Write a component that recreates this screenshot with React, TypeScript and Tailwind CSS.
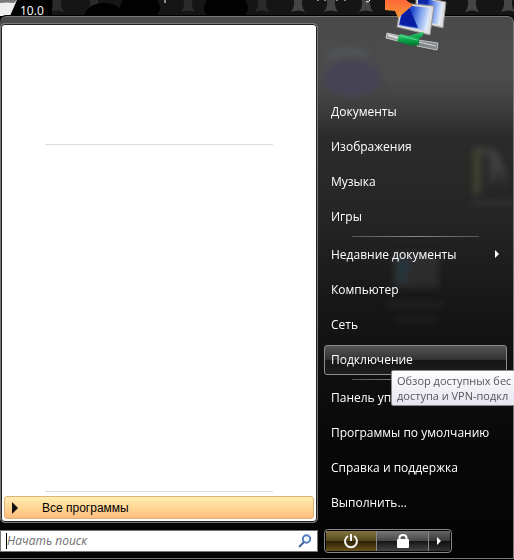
import React from 'react';

const places = ['Документы', 'Изображения', 'Музыка', 'Игры'];
const settings = ['Программы по умолчанию', 'Справка и поддержка', 'Выполнить...'];
const starX = [20, 57, 94, 131, 188, 225, 262, 298, 331, 366, 436, 472, 508];

function Wallpaper() {
  return (
    <svg className="absolute inset-0" width="100%" height="28" aria-hidden="true">
      <rect width="100%" height="28" fill="#151515" />
      {starX.map((x) => (
        <path key={x} d={`M${x - 5} -2 Q${x} 1 ${x + 5} -2 Q${x + 2} 5 ${x + 7} 12 Q${x} 9 ${x - 7} 12 Q${x - 2} 5 ${x - 5} -2Z`} fill={x > 270 ? '#444444' : '#2b2b2b'} />
      ))}
      <ellipse cx="104" cy="17" rx="20" ry="14" fill="#020202" />
      <ellipse cx="140" cy="8" rx="20" ry="14" fill="#020202" />
      <ellipse cx="226" cy="8" rx="22" ry="16" fill="#020202" />
      <path d="M0 0H52V28H0Z" fill="#020202" />
      <path d="M0 0H17L10 16H0Z" fill="#eeeeee" />
      <path d="M0 0H17L14 3Q6 2 0 3Z" fill="#777777" />
      <path d="M165 0v3M370 0q-1 2-4 2M318 0v1M325 0v1M337 0v1M345 0v1" stroke="#ffffff" fill="none" />
    </svg>
  );
}

function NetworkIcon() {
  return (
    <svg className="absolute top-0 right-[64px]" width="70" height="55" viewBox="0 0 70 55" role="img" aria-label="Подключение">
      <defs>
        <linearGradient id="screen" x1="0" y1="0" x2="1" y2="0.2">
          <stop offset="0" stopColor="#0d30b8" /><stop offset="0.45" stopColor="#254dca" />
          <stop offset="0.7" stopColor="#7b9eec" /><stop offset="1" stopColor="#e1edfb" />
        </linearGradient>
        <linearGradient id="arrow" x1="0" y1="0" x2="0" y2="1">
          <stop stopColor="#ff6638" /><stop offset="1" stopColor="#f39b35" />
        </linearGradient>
        <linearGradient id="cable" x1="0" y1="0" x2="0" y2="1">
          <stop stopColor="#3cce7a" /><stop offset="0.5" stopColor="#08a84b" /><stop offset="1" stopColor="#046c2a" />
        </linearGradient>
      </defs>
      <path d="M36 -4L66 2L63 28L50 25L36 20Z" fill="#dedede" stroke="#8d8d92" />
      <path d="M38 -3L63 3L60 25L38 20Z" fill="url(#screen)" />
      <path d="M38 -2L48 0V4L38 3Z" fill="#0b25a7" />
      <path d="M21 3L54 6L50 35L17 27Z" fill="#dedede" stroke="#909095" />
      <path d="M23 5L51 8L47 31L19 25Z" fill="url(#screen)" />
      <path d="M24 7L30 9L38 28L20 24Z" fill="#091da2" />
      <path d="M5 0H26L33 5L18 18L15 11L5 10Z" fill="url(#arrow)" />
      <path d="M44 32L42 37L32 41L25 37L35 34Z" fill="url(#cable)" />
      <path d="M7 33L20 36L18 41L6 38Z" fill="#999c9e" stroke="#c6c8c8" />
      <path d="M8 35L18 38" stroke="#dddddd" strokeWidth="2" />
      <path d="M38 40L58 43L57 50L37 46Z" fill="#85888a" stroke="#bdc1c2" />
      <path d="M39 42L56 46" stroke="#d5d8da" />
      <path d="M20 34L39 38L39 45L31 46L17 41Z" fill="url(#cable)" />
      <path d="M21 36L37 40" stroke="#62d691" />
    </svg>
  );
}

function Reflections() {
  return (
    <svg className="pointer-events-none absolute inset-0" width="195" height="500" aria-hidden="true">
      <defs>
        <filter id="haze"><feGaussianBlur stdDeviation="3" /></filter>
      </defs>
      <g filter="url(#haze)">
        <path d="M10 41Q30 28 49 39" stroke="#64747a" strokeWidth="8" fill="none" opacity="0.25" />
        <ellipse cx="34" cy="61" rx="29" ry="19" fill="#454454" opacity="0.9" />
        <path d="M155 131L170 131V136H163V174L155 180Z" fill="#858054" opacity="0.28" />
        <path d="M170 131L180 135L187 152V173L181 152L173 170Z" fill="#65656d" opacity="0.38" />
        <path d="M153 186H196" stroke="#666666" strokeWidth="3" opacity="0.25" />
        <path d="M75 236H121V271H75Z" fill="#5a6263" opacity="0.24" />
        <path d="M80 241L92 243L87 267L78 263Z" fill="#194858" opacity="0.35" />
        <path d="M68 288H126M77 303H119" stroke="#707070" strokeWidth="5" opacity="0.12" />
      </g>
    </svg>
  );
}

function MenuItem({ children }: { children: React.ReactNode }) {
  return <button type="button" className="flex h-[35px] w-full items-center px-[7px] text-left">{children}</button>;
}

function Separator() {
  return <div className="mx-7 h-[3px] pt-[2px]"><div className="h-px bg-gradient-to-r from-[#555555] via-[#888888] to-[#555555]" /></div>;
}

export default function App() {
  return (
    <main className="relative overflow-hidden bg-black font-['Open_Sans',sans-serif] text-[12px] leading-[16px] text-white">
      <Wallpaper />
      <div className="relative h-4 pt-[3px] pl-5 leading-[15px]">10.0</div>
      <section className="relative flex flex-col rounded-t-[6px] border border-l-0 border-[#777777] bg-[linear-gradient(180deg,#4a4a4a_0px,#4c4c4c_60px,#414141_85px,#2b2b2b_120px,#252525_200px,#151515_300px,#080808_430px,#030303_100%)] outline-1 outline-black">
        <div className="flex">
          <div className="mt-[6px] flex h-[500px] min-w-0 flex-1 flex-col rounded-[5px] border border-[#777777] bg-white p-[3px] shadow-[inset_0_0_0_1px_#222222]">
            <hr className="mx-[41px] mt-[117px] border-[#dddddd]" />
            <hr className="mx-[41px] mt-auto mb-1 border-[#dddddd]" />
            <button type="button" className="flex h-[23px] w-full items-center rounded-[3px] border border-[#ddb277] bg-gradient-to-b from-[#ffedb1] via-[#ffd795] to-[#ffbd7c] px-[7px] text-black font-['Liberation_Sans',sans-serif]">
              <svg width="30" height="14" viewBox="0 0 30 14" aria-hidden="true"><path d="M0 1L6 7L0 13Z" fill="#111111" /></svg>
              Все программы
            </button>
          </div>
          <nav aria-label="Меню Пуск" className="relative w-[195px] px-[6px] pt-[77px]">
            <Reflections />
            <div className="relative">
              {places.map((label) => <MenuItem key={label}>{label}</MenuItem>)}
              <Separator />
              <MenuItem><span className="flex-1">Недавние документы</span><svg width="6" height="9" aria-hidden="true"><path d="M1 0L5 4L1 8Z" fill="white" /></svg></MenuItem>
              <MenuItem>Компьютер</MenuItem>
              <MenuItem>Сеть</MenuItem>
              <div className="relative flex h-[35px] items-center">
                <button type="button" aria-describedby="connection-tip" className="flex h-[30px] w-full items-center rounded-[3px] border border-[#8b8b8b] bg-[linear-gradient(180deg,#555555,#333333_48%,#161616_52%,#1d1d1d)] px-[6px] text-left">Подключение</button>
                <div id="connection-tip" role="tooltip" className="absolute top-[28px] left-[67px] z-10 rounded-[2px] border border-[#888888] bg-gradient-to-b from-white to-[#e4e5f0] py-[2px] pr-[5px] pl-[5px] text-[11px] leading-[15px] whitespace-nowrap text-[#575757]">
                  Обзор доступных бес<br />доступа и VPN-подкл
                </div>
              </div>
              <Separator />
              <MenuItem>Панель управления</MenuItem>
              {settings.map((label) => <MenuItem key={label}>{label}</MenuItem>)}
            </div>
          </nav>
        </div>
        <div className="flex items-start pt-[6px] pb-[5px]">
          <label className="mt-px flex h-[22px] min-w-0 flex-1 items-center border border-[#777777] bg-white px-[5px] text-black">
            <span className="h-4 w-px bg-black" aria-hidden="true" />
            <input aria-label="Начать поиск" placeholder="Начать поиск" className="min-w-0 flex-1 text-[12px] italic outline-none placeholder:text-[#707070]" />
            <svg width="14" height="14" viewBox="0 0 14 14" aria-hidden="true"><circle cx="8.5" cy="5" r="3.7" fill="#f5fbff" stroke="#547dbe" strokeWidth="2" /><path d="M6 8L1 13" stroke="#45649b" strokeWidth="2" /></svg>
          </label>
          <div className="w-[195px] pl-[6px]">
            <div className="flex h-6 w-[128px] overflow-hidden rounded-[4px] border border-[#888888] p-px">
              <button type="button" aria-label="Выключение" className="flex w-[51px] items-center justify-center border-r border-[#888888] bg-[linear-gradient(180deg,#827344,#58491d_49%,#2c2006_51%,#67531b)]">
                <svg width="16" height="16" viewBox="0 0 16 16" fill="none" stroke="#f4f4f4" strokeWidth="2" aria-hidden="true"><path d="M5 3A6 6 0 1 0 11 3M8 1V8" /></svg>
              </button>
              <button type="button" aria-label="Блокировка" className="flex w-[52px] items-center justify-center border-r border-[#888888] bg-[linear-gradient(180deg,#777777,#484848_49%,#151515_51%,#444444)]">
                <svg width="14" height="16" viewBox="0 0 14 16" aria-hidden="true"><path d="M3.500 7V5Q3.500 2 7 2T10.500 5V7" stroke="white" strokeWidth="2" fill="none" /><rect x="1" y="6" width="12" height="9" rx="1" fill="white" /></svg>
              </button>
              <button type="button" aria-label="Параметры завершения" className="flex flex-1 items-center justify-center bg-[linear-gradient(180deg,#666666,#383838_49%,#101010_51%,#333333)]">
                <svg width="5" height="8" aria-hidden="true"><path d="M0 0L4 4L0 8Z" fill="white" /></svg>
              </button>
            </div>
          </div>
        </div>
      </section>
      <div className="h-px" />
      <NetworkIcon />
    </main>
  );
}
